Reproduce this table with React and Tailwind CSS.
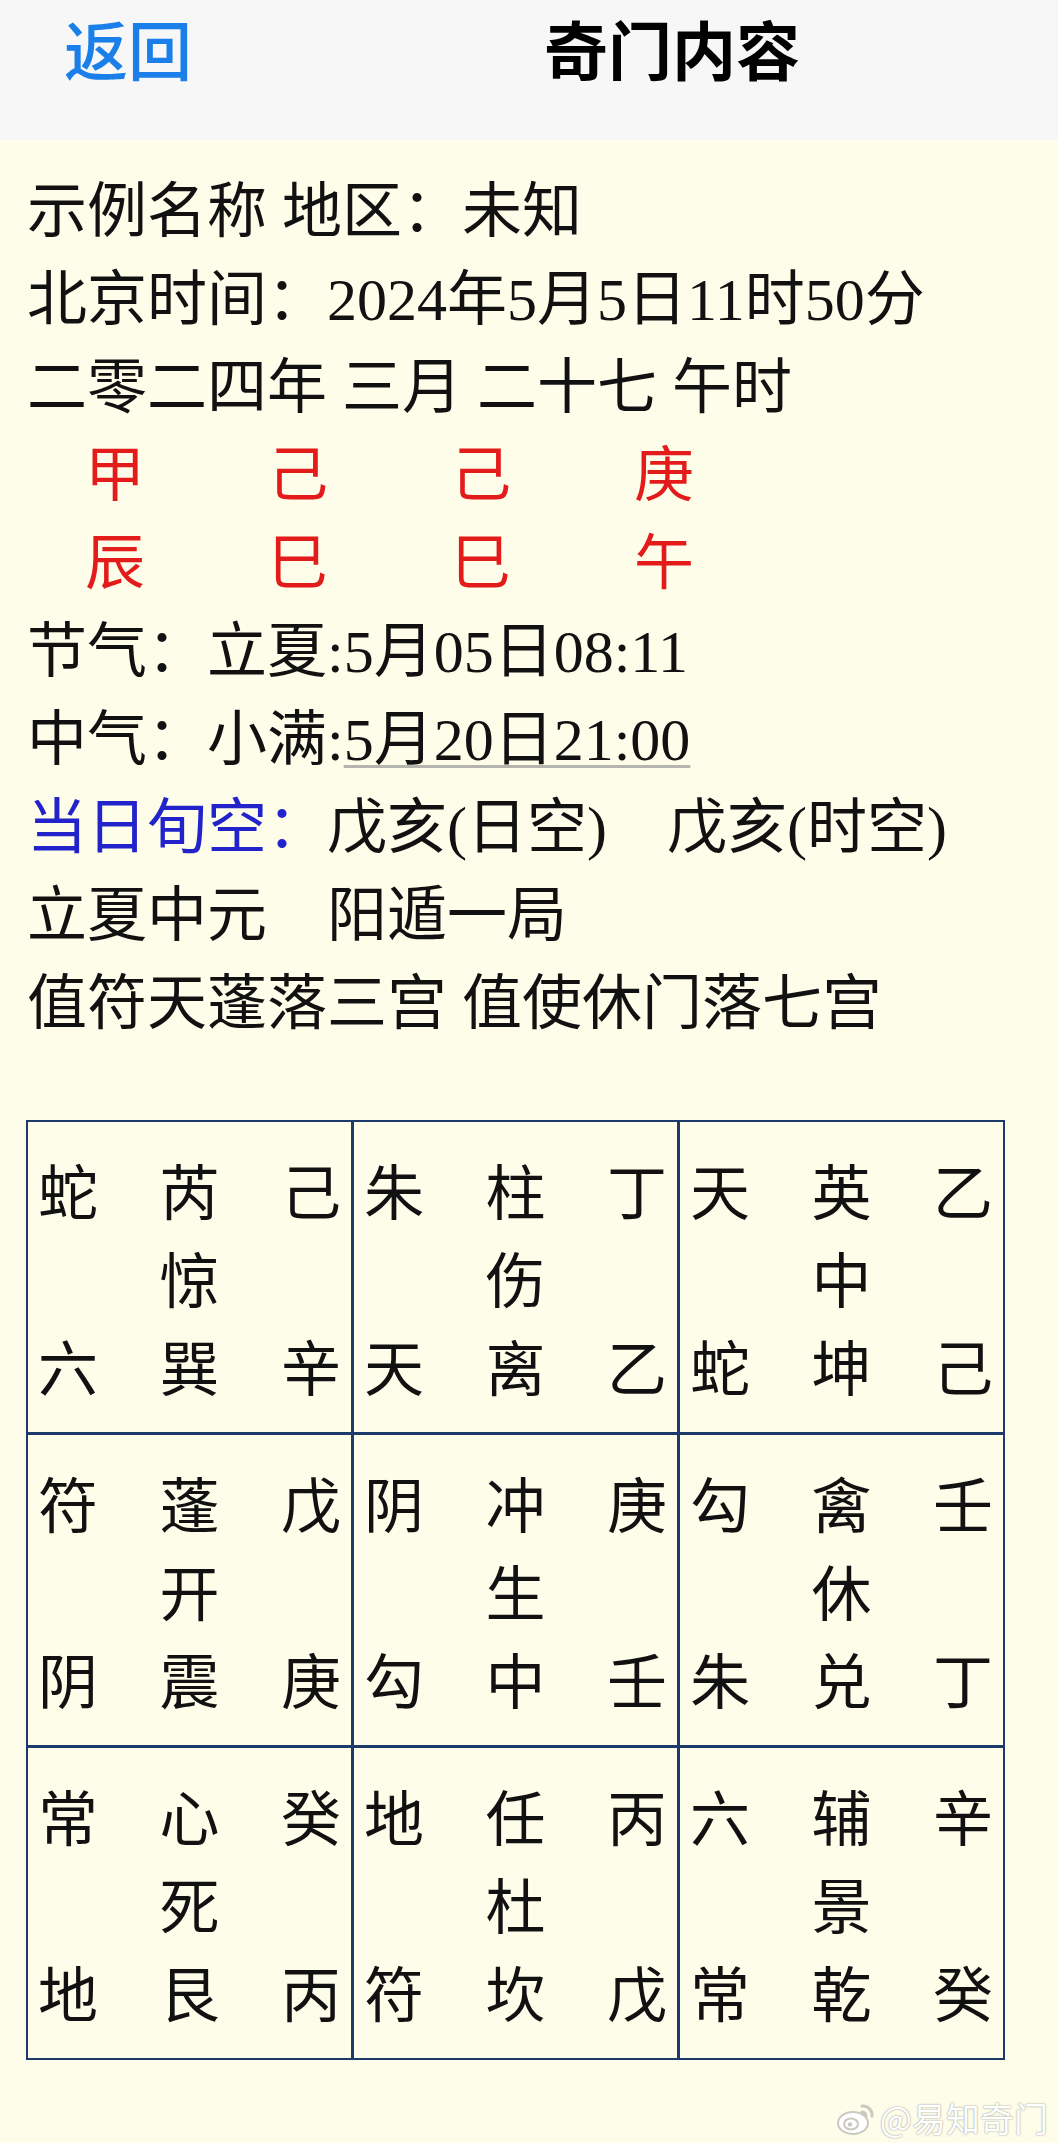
import React from 'react';

const serif = "font-['Liberation_Serif','Noto_Sans_CJK_SC',serif]";

const stems = ['甲', '己', '己', '庚'];
const branches = ['辰', '巳', '巳', '午'];

const palaces = [
    [['蛇', '芮', '己'], '惊', ['六', '巽', '辛']],
    [['朱', '柱', '丁'], '伤', ['天', '离', '乙']],
    [['天', '英', '乙'], '中', ['蛇', '坤', '己']],
    [['符', '蓬', '戊'], '开', ['阴', '震', '庚']],
    [['阴', '冲', '庚'], '生', ['勾', '中', '壬']],
    [['勾', '禽', '壬'], '休', ['朱', '兑', '丁']],
    [['常', '心', '癸'], '死', ['地', '艮', '丙']],
    [['地', '任', '丙'], '杜', ['符', '坎', '戊']],
    [['六', '辅', '辛'], '景', ['常', '乾', '癸']],
];

const Row = ({ items }) => (
    <div className="grid grid-cols-3">
        <span className="text-left">{items[0]}</span>
        <span className="text-center">{items[1]}</span>
        <span className="text-right">{items[2]}</span>
    </div>
);

const Palace = ({ top, door, bottom }) => (
    <div className="bg-[#fdfdea] h-[310px] px-[10px] py-[23px] text-[60px] leading-[88px] text-[#111]">
        <Row items={top} />
        <Row items={['', door, '']} />
        <Row items={bottom} />
    </div>
);

const WeiboLogo = () => (
    <svg width="40" height="36" viewBox="0 0 40 36" fill="none">
        <ellipse cx="17" cy="23" rx="15" ry="11" fill="#fff" stroke="#c9c9c0" strokeWidth="2" />
        <ellipse cx="15" cy="24" rx="7" ry="5.5" fill="#fff" stroke="#c9c9c0" strokeWidth="2" />
        <circle cx="14" cy="24.5" r="2.2" fill="#c9c9c0" />
        <path d="M26 6 a9 9 0 0 1 10 10" stroke="#c9c9c0" strokeWidth="3" strokeLinecap="round" />
        <path d="M26 12 a4 4 0 0 1 4 4" stroke="#c9c9c0" strokeWidth="3" strokeLinecap="round" />
    </svg>
);

export default function App() {
    return (
        <div className="w-[1058px] min-h-[2143px] bg-[#fdfdea]">
            {/* nav bar */}
            <div className="h-[140px] bg-[#f7f7f7] pt-[15px] flex font-['Noto_Sans_CJK_SC',sans-serif] text-[64px] leading-none">
                <span className="pl-[64px] text-[#1a7fe8] font-medium">返回</span>
                <span className="ml-[352px] font-bold text-black">奇门内容</span>
            </div>

            <div className={`pl-[27px] pt-[28px] ${serif} text-[60px] leading-[88px] text-[#111] whitespace-pre`}>
                <div>示例名称 地区：未知</div>
                <div>北京时间：2024年5月5日11时50分</div>
                <div>二零二四年 三月 二十七 午时</div>
                <div className="flex pl-[58px] text-[#e31b1b]">
                    {stems.map((s, i) => (
                        <span key={i} className="w-[183px]">{s}</span>
                    ))}
                </div>
                <div className="flex pl-[58px] text-[#e31b1b]">
                    {branches.map((s, i) => (
                        <span key={i} className="w-[183px]">{s}</span>
                    ))}
                </div>
                <div>节气：立夏:5月05日08:11</div>
                <div>
                    中气：小满:
                    <span className="underline decoration-[3px] decoration-[#b5b5b0] underline-offset-[5px]">5月20日21:00</span>
                </div>
                <div>
                    <span className="text-[#2323cc]">当日旬空：</span>戊亥(日空)    戊亥(时空)
                </div>
                <div>立夏中元    阳遁一局</div>
                <div>值符天蓬落三宫 值使休门落七宫</div>
            </div>

            {/* nine palaces */}
            <div className="mt-[72px] ml-[26px] w-[979px] grid grid-cols-3 gap-[3px] bg-[#1c3a6a] p-[2px] font-['Noto_Sans_CJK_SC',sans-serif]">
                {palaces.map(([top, door, bottom], i) => (
                    <Palace key={i} top={top} door={door} bottom={bottom} />
                ))}
            </div>

            {/* watermark */}
            <div className="mt-[38px] pr-[10px] flex justify-end items-center gap-[4px] h-[40px]">
                <WeiboLogo />
                <span className="font-['Noto_Sans_CJK_SC',sans-serif] text-[34px] leading-none text-white [text-shadow:0_0_2px_#a8a8a0,0_0_1px_#a8a8a0]">
                    @易知奇门
                </span>
            </div>
        </div>
    );
}
